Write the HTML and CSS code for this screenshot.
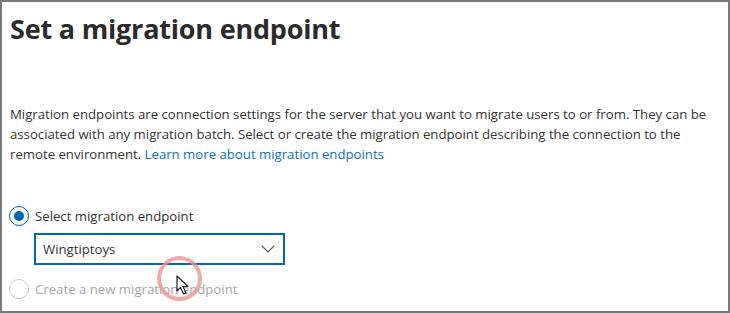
FILE: index.html
```html
<!DOCTYPE html>
<html lang="en">
<head>
  <meta charset="UTF-8" />
  <title>Set a migration endpoint</title>
  <link rel="stylesheet" href="styles.css">
</head>
<body>

  <div class="panel">
    <h1>Set a migration endpoint</h1>

    <p class="intro">
      Migration endpoints are connection settings for the server that you want to migrate users to or from. They can be
      associated with any migration batch. Select or create the migration endpoint describing the connection to the
      remote environment. <a href="#">Learn more about migration endpoints</a>
    </p>

    <div class="choices">
      <label class="choice">
        <span class="radio checked"></span>
        <span>Select migration endpoint</span>
      </label>

      <div class="select">
        <span>Wingtiptoys</span>
        <svg width="14" height="8" viewBox="0 0 14 8"><path d="M1 1 L7 7 L13 1" fill="none" stroke="#555" stroke-width="1.1"/></svg>
      </div>

      <label class="choice disabled">
        <span class="radio"></span>
        <span>Create a new migration endpoint</span>
      </label>
    </div>

    <!-- click marker from the recording -->
    <div class="click-ring"></div>
    <svg class="pointer" width="14" height="20" viewBox="0 0 14 20">
      <path d="M1 1 L1 16 L4.5 12.5 L7.5 19 L10 18 L7 11.5 L12 11.5 Z" fill="#fff" stroke="#222" stroke-width="1.2" stroke-linejoin="round"/>
    </svg>
  </div>

</body>
</html>
```

FILE: styles.css
```css
html, body {
  margin: 0;
  height: 100%;
}

body {
  font-family: 'Open Sans', 'Noto Sans', sans-serif;
  background-color: #fff;
  color: #323130;
}

.panel {
  position: relative;
  box-sizing: border-box;
  height: 313px;
  border: 2px solid #7a7a7a;
  padding: 0 8px 0 7px;
  overflow: hidden;
}

h1 {
  margin: 9px 0 0 1px;
  font-size: 27px;
  font-weight: 700;
  letter-spacing: -0.2px;
  color: #2b2b2b;
  line-height: 36px;
}

.intro {
  margin: 57px 0 0 1px;
  font-size: 13.2px;
  line-height: 20px;
  color: #333;
}

.intro a {
  color: #106ebe;
  text-decoration: none;
}

.choices {
  margin-top: 42px;
  display: flex;
  flex-direction: column;
}

.choice {
  display: flex;
  align-items: center;
  gap: 6px;
  font-size: 13.2px;
  height: 20px;
}

.choice.disabled {
  color: #a6a6a6;
  margin-top: 14px;
}

.radio {
  box-sizing: border-box;
  width: 20px;
  height: 20px;
  border-radius: 50%;
  border: 1px solid #c8c8c8;
  background: #fff;
  display: inline-block;
  position: relative;
}

.radio.checked {
  border-color: #0067b8;
}

.radio.checked::after {
  content: "";
  position: absolute;
  left: 4px;
  top: 4px;
  width: 10px;
  height: 10px;
  border-radius: 50%;
  background: #0067b8;
}

.select {
  box-sizing: border-box;
  margin: 7px 0 0 25px;
  width: 251px;
  height: 32px;
  border: 2px solid #0067b8;
  display: flex;
  align-items: center;
  justify-content: space-between;
  padding: 0 8px 0 7px;
  font-size: 13.2px;
  color: #333;
}

.click-ring {
  position: absolute;
  left: 155px;
  top: 254px;
  width: 37px;
  height: 37px;
  border-radius: 50%;
  border: 4px solid rgba(240, 140, 140, 0.75);
}

.pointer {
  position: absolute;
  left: 174px;
  top: 273px;
}
```
